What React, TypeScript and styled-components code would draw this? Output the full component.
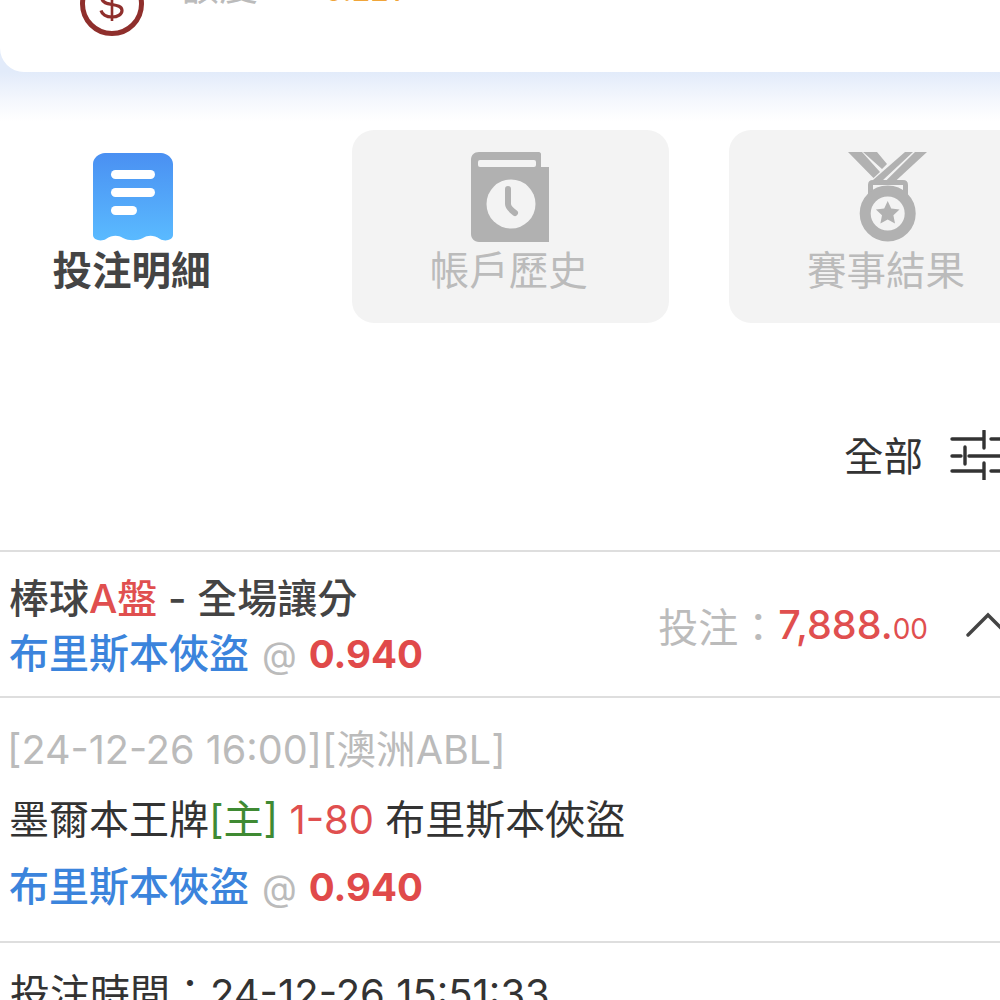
import styled, { createGlobalStyle } from 'styled-components'

const GlobalStyle = createGlobalStyle`
    html, body {
        margin: 0;
        padding: 0;
        background: #fff;
    }
    body {
        font-family: "Inter", "Noto Sans CJK TC", sans-serif;
    }
`

const Page = styled.div`
    width: 1000px;
    height: 1000px;
    overflow: hidden;
    background: #fff;
`

const Wide = styled.div`
    width: 1022px;
`

const Top = styled.div`
    background: #e2ebfa;
`

const Card = styled.div`
    height: 72px;
    overflow: hidden;
    display: flex;
    align-items: flex-end;
    gap: 36px;
    padding: 0 0 36px 80px;
    box-sizing: border-box;
    background: #fff;
    border-radius: 0 0 0 24px;
`

const CoinBox = styled.div`
    flex: none;
    width: 64px;
    height: 64px;
`

const CardLabel = styled.span`
    font-size: 39px;
    line-height: 39px;
    color: #bbb;
    margin-bottom: 31px;
`

const CardValue = styled.span`
    font-size: 30px;
    line-height: 30px;
    font-weight: 500;
    color: #f0a53a;
    margin: 0 0 31px 30px;
`

const Glow = styled.div`
    height: 50px;
    background: linear-gradient(#e2ebfa, #f4f7fd 55%, #fff);
`

const Tabs = styled.div`
    display: flex;
    gap: 60.25px;
    margin: 0 0 0 -25.5px;
    padding-top: 8px;
`

const Tab = styled.div<{ $active?: boolean }>`
    flex: none;
    width: 317px;
    height: 193px;
    box-sizing: border-box;
    padding-top: 22px;
    display: flex;
    flex-direction: column;
    align-items: center;
    border-radius: 22px;
    background: ${props => (props.$active ? '#fff' : '#f3f3f3')};
`

const TabIcon = styled.div`
    width: 80px;
    height: 90px;
`

const TabLabel = styled.div<{ $active?: boolean }>`
    font-size: 39.5px;
    line-height: 56px;
    white-space: nowrap;
    margin: 1px 3px 0 0;
    font-weight: ${props => (props.$active ? 600 : 400)};
    color: ${props => (props.$active ? '#444' : '#bbb')};
`

const FilterBar = styled.div`
    height: 229px;
    box-sizing: border-box;
    padding: 102px 0 0 844px;
    display: flex;
    align-items: flex-start;
    gap: 27px;
    border-bottom: 2px solid #dedede;
`

const FilterText = styled.span`
    font-size: 39.5px;
    line-height: 64px;
    color: #333;
`

const FilterIconBox = styled.div`
    padding-top: 5px;
`

const BetRow = styled.div`
    height: 146px;
    box-sizing: border-box;
    padding: 7px 0 0 9px;
    display: flex;
    align-items: center;
    justify-content: space-between;
    border-bottom: 2px solid #dedede;
`

const Lines = styled.div`
    display: flex;
    flex-direction: column;
`

const Line = styled.div<{ $height: number }>`
    font-size: 40px;
    line-height: ${props => props.$height}px;
    white-space: nowrap;
    color: #333;
`

const Heading = styled.span`
    color: #444;
    font-weight: 500;
`

const Red = styled.span`
    color: #e04f4f;
`

const Green = styled.span`
    color: #3f8a33;
`

const Team = styled.span`
    color: #3b84dc;
    font-weight: 500;
`

const At = styled.span`
    color: #bbb;
    font-size: 36px;
    margin: 0 12px 0 13px;
`

const Odds = styled.span`
    color: #e04a4a;
    font-weight: 700;
    font-size: 38.5px;
`

const Stake = styled.div`
    display: flex;
    align-items: center;
    margin-top: -5px;
`

const StakeLabel = styled.span`
    font-size: 40px;
    color: #bbb;
`

const StakeValue = styled.span`
    font-size: 39.5px;
    color: #e04f4f;
    font-weight: 500;
`

const Cents = styled.span`
    font-size: 28px;
    font-weight: 400;
`

const Chevron = styled.svg`
    margin: 0 0 0 38px;
    flex: none;
`

const Detail = styled.div`
    height: 245px;
    box-sizing: border-box;
    padding: 18px 0 0 9px;
    border-bottom: 2px solid #dedede;
`

const Muted = styled.div`
    font-size: 39.6px;
    line-height: 68px;
    color: #bbb;
    white-space: nowrap;
    margin-left: -2px;
`

const TimeRow = styled.div`
    padding: 19px 0 0 10px;
    font-size: 40px;
    line-height: 64px;
    color: #333;
    white-space: nowrap;
`

const Coin = () => (
    <svg width="64" height="64" viewBox="0 0 64 64">
        <circle cx="32" cy="32" r="29.500" fill="none" stroke="#8f2f2c" strokeWidth="5" />
        <path d="M42 26c-1-4-5-6-10-6-6 0-10 3-10 6.500 0 8.500 20 3.500 20 12 0 3.500-4 6.500-10 6.500-6 0-10-3-11-6.500" fill="none" stroke="#8f2f2c" strokeWidth="3.200" />
        <path d="M32 15v34" stroke="#8f2f2c" strokeWidth="2.600" />
    </svg>
)

const ReceiptIcon = () => (
    <svg width="80" height="90" viewBox="0 0 80 90">
        <defs>
            <linearGradient id="receipt" x1="0" y1="0" x2="0" y2="1">
                <stop offset="0" stopColor="#4a90f2" />
                <stop offset="1" stopColor="#5abaff" />
            </linearGradient>
        </defs>
        <path d="M12 1h56c6 0 12 5 12 11v71c0 5-8 7-13 4-6-4-12-4-17-1-6 3-14 3-20 0-5-3-11-3-17 1-5 3-13 1-13-4V12C0 6 6 1 12 1z" fill="url(#receipt)" />
        <rect x="18" y="18" width="44" height="9" rx="4.500" fill="#fff" />
        <rect x="18" y="36" width="44" height="9" rx="4.500" fill="#fff" />
        <rect x="18" y="54" width="26" height="9" rx="4.500" fill="#fff" />
    </svg>
)

const BookIcon = () => (
    <svg width="80" height="90" viewBox="0 0 80 90">
        <path d="M9 0h60c1 0 2 1 2 2v13h8v75H9c-5 0-8-4-8-8V8c0-5 3-8 8-8z" fill="#b1b1b1" />
        <rect x="8" y="8" width="58" height="7" rx="2" fill="#f3f3f3" />
        <circle cx="41" cy="52" r="24.500" fill="#f3f3f3" />
        <path d="M38 37v15c0 3 3 6 7 9" fill="none" stroke="#b1b1b1" strokeWidth="6" strokeLinecap="round" />
    </svg>
)

const MedalIcon = () => (
    <svg width="80" height="90" viewBox="0 0 80 90">
        <path d="M0 0h14l18 20-6.500 6zM15 0h14l10 12-5 5z" fill="#b1b1b1" />
        <path d="M57 0h8L35 28H25zM67 0h12L48.700 28h-10z" fill="#b1b1b1" />
        <path d="M22.500 44V33c0-1.500 1-2.500 2.500-2.500h30c1.500 0 2.500 1 2.500 2.500v11" fill="none" stroke="#b1b1b1" strokeWidth="5" />
        <circle cx="39.700" cy="61.500" r="22.500" fill="#f3f3f3" stroke="#b1b1b1" strokeWidth="11" />
        <path d="M39.700 49l3.500 7.500 8.300 1-6.100 5.700 1.600 8.200-7.300-4-7.300 4 1.600-8.200-6.100-5.700 8.300-1z" fill="#b1b1b1" />
    </svg>
)

const SlidersIcon = () => (
    <svg width="68" height="50" viewBox="0 0 68 50" fill="none" stroke="#333" strokeWidth="3.400" strokeLinecap="round">
        <path d="M2 9h30M34 1v17M41 9h26" />
        <path d="M2 26h9M15 17v17M19 26h48" />
        <path d="M2 41h30M34 33v17M41 41h26" />
    </svg>
)

const App = () => {
    return <>
        <GlobalStyle />
        <Page>
            <Wide>
                <Top>
                    <Card>
                        <CoinBox><Coin /></CoinBox>
                        <CardLabel>額度</CardLabel>
                        <CardValue>0.221</CardValue>
                    </Card>
                </Top>
                <Glow />

                <Tabs>
                    <Tab $active>
                        <TabIcon><ReceiptIcon /></TabIcon>
                        <TabLabel $active>投注明細</TabLabel>
                    </Tab>
                    <Tab>
                        <TabIcon><BookIcon /></TabIcon>
                        <TabLabel>帳戶歷史</TabLabel>
                    </Tab>
                    <Tab>
                        <TabIcon><MedalIcon /></TabIcon>
                        <TabLabel>賽事結果</TabLabel>
                    </Tab>
                </Tabs>

                <FilterBar>
                    <FilterText>全部</FilterText>
                    <FilterIconBox><SlidersIcon /></FilterIconBox>
                </FilterBar>

                <BetRow>
                    <Lines>
                        <Line $height={54}>
                            <Heading>棒球<Red>A盤</Red> - 全場讓分</Heading>
                        </Line>
                        <Line $height={56}>
                            <Team>布里斯本俠盜</Team><At>@</At><Odds>0.940</Odds>
                        </Line>
                    </Lines>
                    <Stake>
                        <StakeLabel>投注：</StakeLabel>
                        <StakeValue>7,888.<Cents>00</Cents></StakeValue>
                        <Chevron width="56" height="28" viewBox="0 0 56 28" fill="none" stroke="#444" strokeWidth="3.400" strokeLinecap="round">
                            <path d="M2 24L22 4l20 20" />
                        </Chevron>
                    </Stake>
                </BetRow>

                <Detail>
                    <Muted>[24-12-26 16:00][澳洲ABL]</Muted>
                    <Line $height={72}>
                        墨爾本王牌<Green>[主]</Green> <Red>1-80</Red> 布里斯本俠盜
                    </Line>
                    <Line $height={62}>
                        <Team>布里斯本俠盜</Team><At>@</At><Odds>0.940</Odds>
                    </Line>
                </Detail>

                <TimeRow>投注時間：24-12-26 15:51:33</TimeRow>
            </Wide>
        </Page>
    </>
}

export default App
